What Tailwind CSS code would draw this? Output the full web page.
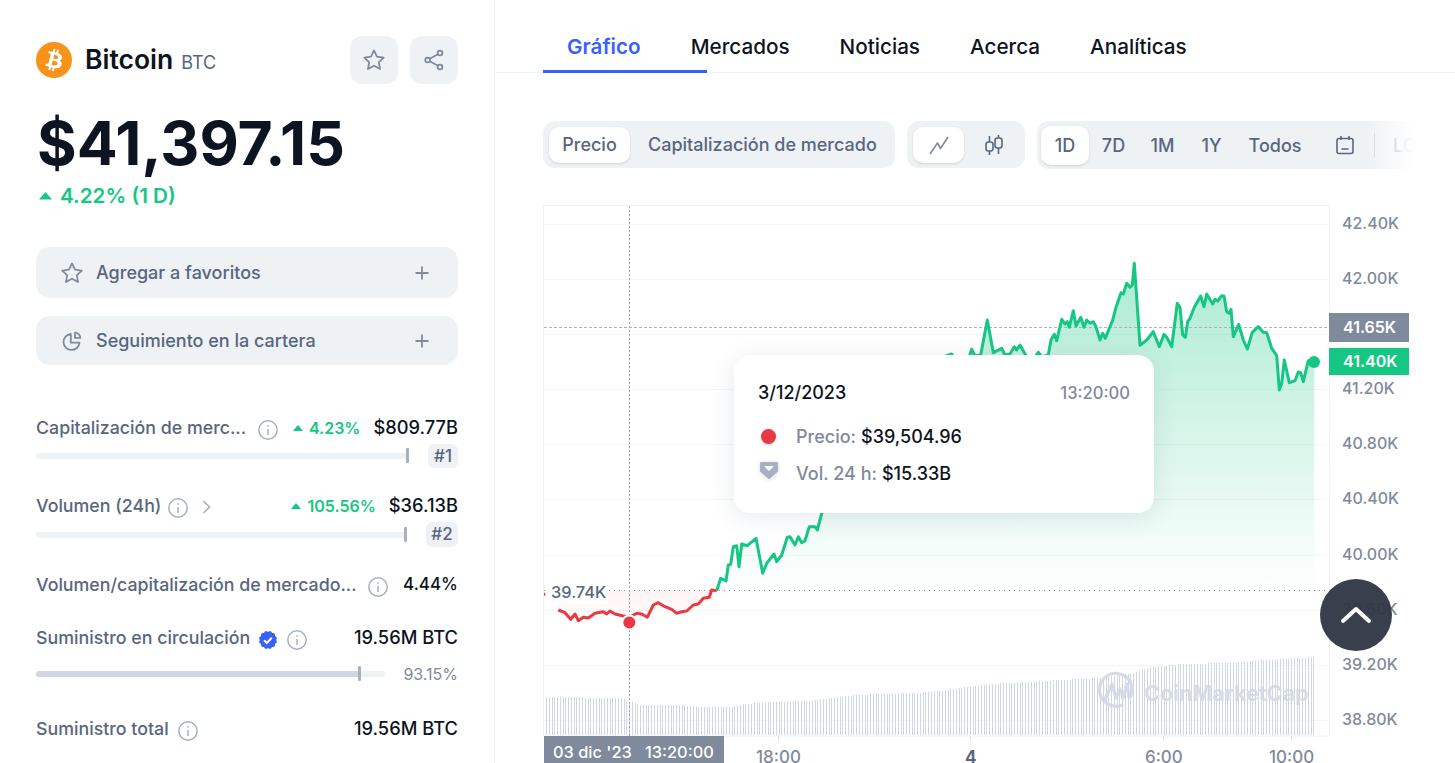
<!DOCTYPE html>
<html lang="es">
<head>
    <meta charset="UTF-8">
    <title>Bitcoin BTC</title>
    <script src="https://cdn.jsdelivr.net/npm/@tailwindcss/browser@4"></script>
</head>
<body class="bg-white overflow-hidden font-[Inter,sans-serif] text-[#0d1421]">
<div class="flex w-[1455px] h-[763px] overflow-hidden">

    <!-- columna izquierda -->
    <aside class="w-[495px] h-[763px] shrink-0 border-r border-[#eff2f5] pl-[36px] pr-[36px] pt-[36px] overflow-hidden">
        <div class="flex items-center justify-between h-[48px]">
            <div class="flex items-center">
                <svg class="w-[36px] h-[36px]" viewBox="0 0 32 32"><circle cx="16" cy="16" r="16" fill="#f7931a"/><path fill="#fff" d="M23.189 14.02c.314-2.096-1.283-3.223-3.465-3.975l.708-2.84-1.728-.43-.69 2.765c-.454-.114-.92-.22-1.385-.326l.695-2.783L15.596 6l-.708 2.839c-.376-.086-.746-.17-1.104-.26l.002-.009-2.384-.595-.46 1.846s1.283.294 1.256.312c.7.175.826.638.805 1.006l-.806 3.235c.048.012.11.03.18.057l-.183-.045-1.13 4.532c-.086.212-.303.531-.793.41.018.025-1.256-.313-1.256-.313l-.858 1.978 2.25.561c.418.105.828.215 1.231.318l-.715 2.872 1.727.43.708-2.84c.472.127.93.245 1.378.357l-.706 2.828 1.728.43.715-2.866c2.948.558 5.164.333 6.097-2.333.752-2.146-.037-3.385-1.588-4.192 1.13-.26 1.98-1.003 2.207-2.538zm-3.95 5.538c-.533 2.147-4.148.986-5.32.695l.95-3.805c1.172.293 4.929.872 4.37 3.11zm.535-5.569c-.487 1.953-3.495.96-4.47.717l.86-3.45c.975.243 4.118.696 3.61 2.733z"/></svg>
                <span class="ml-[13px] text-[26.5px] font-semibold">Bitcoin</span>
                <span class="ml-[8px] mt-[4px] text-[18px] text-[#58667e]">BTC</span>
            </div>
            <div class="flex gap-[12px]">
                <button class="w-[48px] h-[48px] rounded-[12px] bg-[#eff2f5] flex items-center justify-center">
                    <svg class="w-[24px] h-[24px]" viewBox="0 0 24 24" fill="none" stroke="#808a9d" stroke-width="1.8" stroke-linejoin="round"><path d="M12 2.5l3 6.1 6.7 1-4.9 4.7 1.2 6.7-6-3.2-6 3.2 1.2-6.7-4.9-4.7 6.7-1z"/></svg>
                </button>
                <button class="w-[48px] h-[48px] rounded-[12px] bg-[#eff2f5] flex items-center justify-center">
                    <svg class="w-[24px] h-[24px]" viewBox="0 0 24 24" fill="none" stroke="#808a9d" stroke-width="1.8"><circle cx="18" cy="5" r="2.4"/><circle cx="5.7" cy="12" r="2.4"/><circle cx="18" cy="19" r="2.4"/><path d="M7.8 10.8l8.1-4.6M7.8 13.2l8.1 4.6"/></svg>
                </button>
            </div>
        </div>

        <div class="mt-[25px] text-[60.6px] leading-[68px] font-bold ml-[1px]">$41,397.15</div>
        <div class="flex items-center mt-[7px] h-[24px] text-[20.7px] font-semibold text-[#16c784]">
            <svg class="w-[13px] h-[8px] ml-[3px]" viewBox="0 0 13 8"><path d="M6.5 0L13 7.5H0z" fill="#16c784"/></svg>
            <span class="ml-[8px]">4.22% (1 D)</span>
        </div>

        <button class="mt-[39px] w-full h-[51px] rounded-[14px] bg-[#eff2f5] flex items-center pl-[24px] pr-[26px] text-[18px] font-medium text-[#58667e]">
            <svg class="w-[24px] h-[24px]" viewBox="0 0 24 24" fill="none" stroke="#808a9d" stroke-width="1.8" stroke-linejoin="round"><path d="M12 2.5l3 6.1 6.7 1-4.9 4.7 1.2 6.7-6-3.2-6 3.2 1.2-6.7-4.9-4.7 6.7-1z"/></svg>
            <span class="ml-[12px]">Agregar a favoritos</span>
            <svg class="ml-auto w-[20px] h-[20px]" viewBox="0 0 20 20" stroke="#808a9d" stroke-width="1.8"><path d="M10 3.5v13M3.5 10h13"/></svg>
        </button>
        <button class="mt-[18px] w-full h-[49px] rounded-[14px] bg-[#eff2f5] flex items-center pl-[24px] pr-[26px] text-[18px] font-medium text-[#58667e]">
            <svg class="w-[24px] h-[24px]" viewBox="0 0 24 24" fill="none" stroke="#808a9d" stroke-width="1.8" stroke-linejoin="round"><path d="M10.8 5a8 8 0 1 0 8.7 8.7h-8.7z"/><path d="M15 3.6v5.2h5.3a5.3 5.3 0 0 0-5.3-5.2z"/></svg>
            <span class="ml-[12px]">Seguimiento en la cartera</span>
            <svg class="ml-auto w-[20px] h-[20px]" viewBox="0 0 20 20" stroke="#808a9d" stroke-width="1.8"><path d="M10 3.5v13M3.5 10h13"/></svg>
        </button>

        <!-- estadísticas -->
        <div class="mt-[51px] text-[18.3px] font-medium">
            <div class="flex items-center h-[24px]">
                <span class="text-[17.8px] text-[#58667e]">Capitalización de merc...</span>
                <svg class="w-[22px] h-[22px] ml-[11px] mt-[3px]" viewBox="0 0 22 22" fill="none" stroke="#a6b0c3" stroke-width="1.5"><circle cx="11" cy="11" r="9.2"/><path d="M11 10v6M11 6.2v1.6"/></svg>
                <svg class="w-[10px] h-[6px] ml-auto" viewBox="0 0 10 6"><path d="M5 0l5 6H0z" fill="#16c784"/></svg>
                <span class="ml-[6px] text-[16px] text-[#16c784] font-semibold">4.23%</span>
                <span class="ml-[13px]">$809.77B</span>
            </div>
            <div class="flex items-center mt-[4px] h-[24px]">
                <div class="relative w-[373px] h-[6px] rounded-full bg-[#eff2f5]">
                    <div class="absolute right-0 top-[-5px] w-[3px] h-[15px] rounded-[1px] bg-[#a6b0c3]"></div>
                </div>
                <span class="ml-auto h-[24px] w-[30px] rounded-[6px] bg-[#eff2f5] text-center text-[17px] text-[#58667e] leading-[24px]">#1</span>
            </div>

            <div class="flex items-center h-[24px] mt-[26px]">
                <span class="text-[17.8px] text-[#58667e]">Volumen (24h)</span>
                <svg class="w-[22px] h-[22px] ml-[6px] mt-[3px]" viewBox="0 0 22 22" fill="none" stroke="#a6b0c3" stroke-width="1.5"><circle cx="11" cy="11" r="9.2"/><path d="M11 10v6M11 6.2v1.6"/></svg>
                <svg class="w-[10px] h-[14px] ml-[13px] mt-[2px]" viewBox="0 0 10 14" fill="none" stroke="#a6b0c3" stroke-width="1.6"><path d="M1.5 1l6 6-6 6"/></svg>
                <svg class="w-[10px] h-[6px] ml-auto" viewBox="0 0 10 6"><path d="M5 0l5 6H0z" fill="#16c784"/></svg>
                <span class="ml-[7px] text-[16px] text-[#16c784] font-semibold">105.56%</span>
                <span class="ml-[13px]">$36.13B</span>
            </div>
            <div class="flex items-center mt-[4px] h-[25px]">
                <div class="relative w-[371px] h-[6px] rounded-full bg-[#eff2f5]">
                    <div class="absolute right-0 top-[-5px] w-[3px] h-[15px] rounded-[1px] bg-[#a6b0c3]"></div>
                </div>
                <span class="ml-auto h-[25px] w-[32px] rounded-[6px] bg-[#eff2f5] text-center text-[17px] text-[#58667e] leading-[25px]">#2</span>
            </div>

            <div class="flex items-center h-[24px] mt-[26px]">
                <span class="text-[17.8px] text-[#58667e]">Volumen/capitalización de mercado...</span>
                <svg class="w-[22px] h-[22px] ml-[10px] mt-[3px]" viewBox="0 0 22 22" fill="none" stroke="#a6b0c3" stroke-width="1.5"><circle cx="11" cy="11" r="9.2"/><path d="M11 10v6M11 6.2v1.6"/></svg>
                <span class="ml-auto text-[17px]">4.44%</span>
            </div>

            <div class="flex items-center h-[24px] mt-[29px]">
                <span class="text-[17.8px] text-[#58667e]">Suministro en circulación</span>
                <svg class="w-[20px] h-[20px] ml-[8px] mt-[4px]" viewBox="0 0 20 20"><g fill="#3861fb"><rect x="3" y="3" width="14" height="14" rx="2"/><rect x="3" y="3" width="14" height="14" rx="2" transform="rotate(30 10 10)"/><rect x="3" y="3" width="14" height="14" rx="2" transform="rotate(60 10 10)"/></g><path d="M6 10.2l2.8 2.8 5-5.2" fill="none" stroke="#fff" stroke-width="2"/></svg>
                <svg class="w-[22px] h-[22px] ml-[8px] mt-[4px]" viewBox="0 0 22 22" fill="none" stroke="#a6b0c3" stroke-width="1.5"><circle cx="11" cy="11" r="9.2"/><path d="M11 10v6M11 6.2v1.6"/></svg>
                <span class="ml-auto">19.56M BTC</span>
            </div>
            <div class="flex items-center mt-[12px] h-[24px]">
                <div class="relative w-[349px] h-[6px] rounded-full bg-[#eff2f5]">
                    <div class="w-[324px] h-[6px] rounded-full bg-[#cfd6e4]"></div>
                    <div class="absolute left-[322px] top-[-5px] w-[3px] h-[15px] rounded-[1px] bg-[#a6b0c3]"></div>
                </div>
                <span class="ml-auto text-[16px] text-[#808a9d] font-normal">93.15%</span>
            </div>

            <div class="flex items-center h-[24px] mt-[31px]">
                <span class="text-[17.8px] text-[#58667e]">Suministro total</span>
                <svg class="w-[22px] h-[22px] ml-[8px] mt-[3px]" viewBox="0 0 22 22" fill="none" stroke="#a6b0c3" stroke-width="1.5"><circle cx="11" cy="11" r="9.2"/><path d="M11 10v6M11 6.2v1.6"/></svg>
                <span class="ml-auto">19.56M BTC</span>
            </div>
        </div>
    </aside>

    <!-- columna derecha -->
    <main class="flex-1 min-w-0 relative">
        <nav class="relative h-[73px] border-b border-[#eff2f5] pl-[72px] pt-[22px] flex items-center gap-[50px] text-[20.7px] font-medium">
            <span class="text-[#3861fb] font-semibold">Gráfico</span>
            <span>Mercados</span>
            <span>Noticias</span>
            <span>Acerca</span>
            <span>Analíticas</span>
            <div class="absolute left-[48px] bottom-[-1px] w-[164px] h-[3px] bg-[#3861fb]"></div>
        </nav>

        <!-- barra de controles -->
        <div class="flex items-start ml-[48px] mt-[48px] text-[18px] font-medium text-[#58667e] h-[48px]">
            <div class="flex items-center h-[47px] w-[352px] rounded-[12px] bg-[#eff2f5] pl-[6px]">
                <span class="w-[81px] h-[36px] rounded-[10px] bg-white shadow-sm flex items-center justify-center">Precio</span>
                <span class="ml-[18px]">Capitalización de mercado</span>
            </div>
            <div class="flex items-center h-[47px] w-[118px] ml-[12px] rounded-[12px] bg-[#eff2f5] pl-[6px]">
                <span class="w-[51px] h-[36px] rounded-[10px] bg-white shadow-sm flex items-center justify-center">
                    <svg class="w-[22px] h-[22px]" viewBox="0 0 22 22" fill="none" stroke="#808a9d" stroke-width="1.6" stroke-linejoin="round"><path d="M2 20l7.5-11 3 5.5L20 3"/></svg>
                </span>
                <svg class="w-[24px] h-[24px] ml-[18px]" viewBox="0 0 24 24" fill="none" stroke="#58667e" stroke-width="1.6"><path d="M7.5 3v6M7.5 18v4M16.5 2v3M16.5 15v6"/><rect x="4" y="9" width="7" height="9" rx="2.5"/><rect x="13" y="5" width="7" height="10" rx="2.5"/></svg>
            </div>
            <div class="relative flex items-center h-[48px] w-[377px] ml-[12px] rounded-l-[12px] bg-[#eff2f5] pl-[4px] overflow-hidden">
                <span class="w-[48px] h-[39px] shrink-0 rounded-[10px] bg-white shadow-sm flex items-center justify-center">1D</span>
                <span class="w-[49px] shrink-0 text-center">7D</span>
                <span class="w-[49px] shrink-0 text-center">1M</span>
                <span class="w-[49px] shrink-0 text-center">1Y</span>
                <span class="w-[78px] shrink-0 text-center">Todos</span>
                <svg class="w-[22px] h-[22px] shrink-0 ml-[20px]" viewBox="0 0 22 22" fill="none" stroke="#58667e" stroke-width="1.6"><rect x="3" y="4.5" width="16" height="15" rx="2"/><path d="M7 2v4M15 2v4M7.5 15h7"/></svg>
                <span class="ml-[18px] w-px h-[24px] shrink-0 bg-[#cfd6e4]"></span>
                <span class="ml-[18px] text-[#a6b0c3]">LOG</span>
                <div class="absolute right-0 top-0 w-[48px] h-[48px] bg-linear-to-r from-white/0 to-white"></div>
            </div>
        </div>

        <!-- gráfico -->
        <div class="absolute left-[48px] top-[205px] w-[912px] h-[558px]">
            <svg id="chart" class="absolute inset-0" width="912" height="558" viewBox="543 205 912 558" fill="none"></svg>

            <div class="absolute left-[799px] top-[6px] flex flex-col gap-[31.1px] text-[16px] leading-[24px] text-[#808a9d] font-medium">
                <span>42.40K</span><span>42.00K</span><span>41.60K</span><span>41.20K</span><span>40.80K</span><span>40.40K</span><span>40.00K</span><span>39.60K</span><span>39.20K</span><span>38.80K</span>
            </div>
            <div class="absolute left-[786px] top-[108px] w-[80px] h-[29px] bg-[#808a9d] text-white text-[16px] font-semibold leading-[29px] pl-[14px]">41.65K</div>
            <div class="absolute left-[786px] top-[143px] w-[80px] h-[27px] bg-[#16c784] text-white text-[16px] font-semibold leading-[27px] pl-[14px]">41.40K</div>

            <div class="absolute left-[6px] top-[375px] h-[24px] px-[2px] bg-white/90 text-[16.4px] leading-[24px] font-medium text-[#58667e]">39.74K</div>

            <!-- marca de agua -->
            <div class="absolute left-[601px] top-[475px] text-[21.5px] leading-[26px] font-bold text-[#cfd6e4]/80">CoinMarketCap</div>

            <!-- eje de tiempo -->
            <div class="absolute left-[1px] top-[531px] w-[180px] h-[27px] bg-[#808a9d] text-white text-[16.4px] font-medium leading-[33px] pl-[9px] whitespace-pre overflow-hidden">03 dic '23   13:20:00</div>
            <span class="absolute left-[213px] top-[540px] text-[17px] leading-[24px] font-medium text-[#808a9d]">18:00</span>
            <span class="absolute left-[422px] top-[540px] text-[17px] leading-[24px] font-bold text-[#58667e]">4</span>
            <span class="absolute left-[602px] top-[540px] text-[17px] leading-[24px] font-medium text-[#808a9d]">6:00</span>
            <span class="absolute left-[726px] top-[540px] text-[17px] leading-[24px] font-medium text-[#808a9d]">10:00</span>

            <!-- tooltip -->
            <div class="absolute left-[191px] top-[150px] w-[420px] h-[158px] rounded-[16px] bg-white shadow-[0_4px_24px_rgba(88,102,126,0.14)] pl-[24px] pr-[24px] pt-[26px] text-[18px] font-medium">
                <div class="flex justify-between h-[24px] leading-[24px]">
                    <span>3/12/2023</span>
                    <span class="text-[16.6px] text-[#808a9d]">13:20:00</span>
                </div>
                <div class="flex items-center h-[24px] mt-[19px]">
                    <span class="w-[15px] h-[15px] ml-[3px] rounded-full bg-[#ea3943] shadow-[0_1px_3px_rgba(88,102,126,0.3)]"></span>
                    <span class="ml-[20px] text-[#808a9d]">Precio:</span>
                    <span class="ml-[5px]">$39,504.96</span>
                </div>
                <div class="flex items-center h-[24px] mt-[13px]">
                    <svg class="w-[22px] h-[20px] mt-[-5px] drop-shadow-sm" viewBox="0 0 22 20"><path d="M3 2h16v8l-8 7-8-7z" fill="#a6b0c3" stroke="#a6b0c3" stroke-width="2" stroke-linejoin="round"/><path d="M7 5.5h8l-4 4z" fill="#fff" stroke="#fff" stroke-linejoin="round"/></svg>
                    <span class="ml-[16px] text-[#808a9d]">Vol. 24 h:</span>
                    <span class="ml-[5px]">$15.33B</span>
                </div>
            </div>

            <!-- volver arriba -->
            <button class="absolute left-[777px] top-[374px] w-[72px] h-[72px] rounded-full bg-[#2f3543]/95 flex items-center justify-center">
                <svg class="w-[32px] h-[20px]" viewBox="0 0 32 20" fill="none" stroke="#fff" stroke-width="4" stroke-linecap="round" stroke-linejoin="round"><path d="M3 16L16 4l13 12"/></svg>
            </button>
        </div>
    </main>
</div>

<script>
    // puntos leídos del gráfico, en coordenadas de página
    const svg = document.getElementById('chart');

    const fromZoom = (pts, ox, oy) => pts.map(([x, y]) => [ox + x / 3, oy + y / 3]);

    const redLine = fromZoom([[12,283],[16,283]], 540, 500).concat(fromZoom([[55,330],[75,338],[92,358],[105,342],[115,362],[130,352],[145,354],[165,340],[190,335],[200,342],[210,333],[225,342],[250,348],[268,352],[290,340],[305,342],[322,352],[340,315],[355,308],[375,320],[395,328],[410,340],[425,335],[440,333],[460,315],[475,312],[490,295],[508,292],[515,270],[530,272]], 540, 500));

    const greenLow = fromZoom([[530,272],[542,235],[558,243],[565,195],[572,193],[580,140],[590,137],[597,200],[605,132],[622,137],[648,115],[668,220],[680,190],[702,162],[710,185],[725,165],[742,112],[750,110],[765,135],[775,110],[785,128],[795,122],[808,80],[825,80],[832,90],[845,40]], 540, 500);

    const greenHigh = fromZoom([[-100,500],[5,462],[15,480],[55,480],[65,448],[75,468],[92,465],[112,360],[130,458],[155,445],[165,465],[180,462],[193,440],[200,450],[210,435],[222,457],[235,478],[250,478],[265,457],[275,470],[295,465],[303,420],[313,403],[320,422],[335,358],[345,372],[352,365],[358,382],[370,332],[378,378],[392,352],[402,382],[410,360],[420,370],[430,365],[437,378],[450,420],[458,400],[466,415],[488,360],[497,325],[513,278],[520,282],[530,250],[540,262],[547,255],[553,190],[570,436],[590,420],[610,395],[628,440],[642,403],[650,412],[665,440],[682,310],[690,322],[698,405],[706,412],[713,365],[720,355],[733,322],[752,288],[762,320],[770,282],[788,312],[795,298],[803,303],[815,287],[822,288],[830,335],[838,340],[843,328],[850,410],[866,373],[880,420],[892,447],[907,397],[925,380],[940,397],[950,398],[965,445],[980,467],[988,570],[995,550],[1003,480],[1018,548],[1035,542],[1045,516],[1052,518],[1060,545],[1075,482],[1093,485]], 950, 200);

    const greenLine = greenLow.concat(greenHigh);
    const toD = pts => pts.map((p, i) => (i ? 'L' : 'M') + p[0].toFixed(1) + ' ' + p[1].toFixed(1)).join('');

    // volumen: techo de las barras según x
    const volTop = [[546,697],[620,698],[630,702],[640,704.5],[680,705],[700,707],[730,707],[745,704],[770,702],[810,701],[830,698],[855,695],[880,694],[915,693],[940,691],[960,688],[990,684],[1043,681],[1100,678],[1133,673],[1150,667],[1183,664],[1233,663],[1253,661],[1283,659],[1314,657]];
    const topAt = x => {
        for (let i = 1; i < volTop.length; i++) {
            if (x <= volTop[i][0]) {
                const [x0, y0] = volTop[i - 1], [x1, y1] = volTop[i];
                return y0 + (y1 - y0) * (x - x0) / (x1 - x0);
            }
        }
        return 657;
    };
    let bars = '';
    for (let x = 546; x <= 1314; x += 2.77) {
        bars += 'M' + (Math.round(x) + 0.5) + ' 735V' + Math.round(topAt(x));
    }

    let grid = '';
    [224.5, 279.5, 334.5, 389.5, 444.5, 499.5, 555.5, 610.5, 665.5, 720.5].forEach(y => { grid += 'M544 ' + y + 'H1329'; });

    svg.innerHTML = `
        <defs>
            <linearGradient id="gUp" gradientUnits="userSpaceOnUse" x1="0" y1="264" x2="0" y2="590">
                <stop offset="0" stop-color="#16c784" stop-opacity="0.36"/>
                <stop offset="1" stop-color="#16c784" stop-opacity="0"/>
            </linearGradient>
            <linearGradient id="gDown" gradientUnits="userSpaceOnUse" x1="0" y1="590" x2="0" y2="625">
                <stop offset="0" stop-color="#ea3943" stop-opacity="0.06"/>
                <stop offset="1" stop-color="#ea3943" stop-opacity="0"/>
            </linearGradient>
        </defs>
        <path d="M543.5 736V205.5H1329.5V736H543.5" stroke="#eff2f5"/>
        <path d="${grid}" stroke="#f3f5f7"/>
        <path d="${toD(greenLine)}L1314 590.5L717 590.5Z" fill="url(#gUp)"/>
        <path d="${toD(redLine.slice(2))}L717 590.5L558 590.5Z" fill="url(#gDown)"/>
        <path d="${bars}" stroke="#cfd6e4" stroke-width="1"/>
        <path d="M544 327.5H1329" stroke="#adb2c2" stroke-dasharray="3 2"/>
        <path d="M544 590.5H1329" stroke="#808a9d" stroke-dasharray="1 4"/>
        <path d="M629.5 206V736" stroke="#a1a7bb" stroke-dasharray="2 2"/>
        <path d="${toD(redLine.slice(0,2))}${toD(redLine.slice(2))}" stroke="#ea3943" stroke-width="3" stroke-linejoin="round"/>
        <path d="${toD(greenLine)}" stroke="#16c784" stroke-width="3" stroke-linejoin="round"/>
        <circle cx="629.3" cy="622.5" r="7" fill="#ea3943" stroke="#fff" stroke-width="2"/>
        <circle cx="1314" cy="362" r="6" fill="#16c784"/>
        <path d="M628.5 736V741" stroke="#fff"/>
        <path d="M778.5 736V741M970.5 736V741M1163.5 736V741M1291.5 736V741" stroke="#dfe3ea"/>
        <g stroke="#cfd6e4" stroke-opacity="0.85" stroke-width="3.2" stroke-linecap="round" stroke-linejoin="round">
            <path d="M1131 696A16.4 16.4 0 1 0 1122 705"/>
            <path d="M1105 699L1112 684L1116 698L1120 689L1123 698L1127 684L1129 697"/>
        </g>`;
</script>
</body>
</html>
